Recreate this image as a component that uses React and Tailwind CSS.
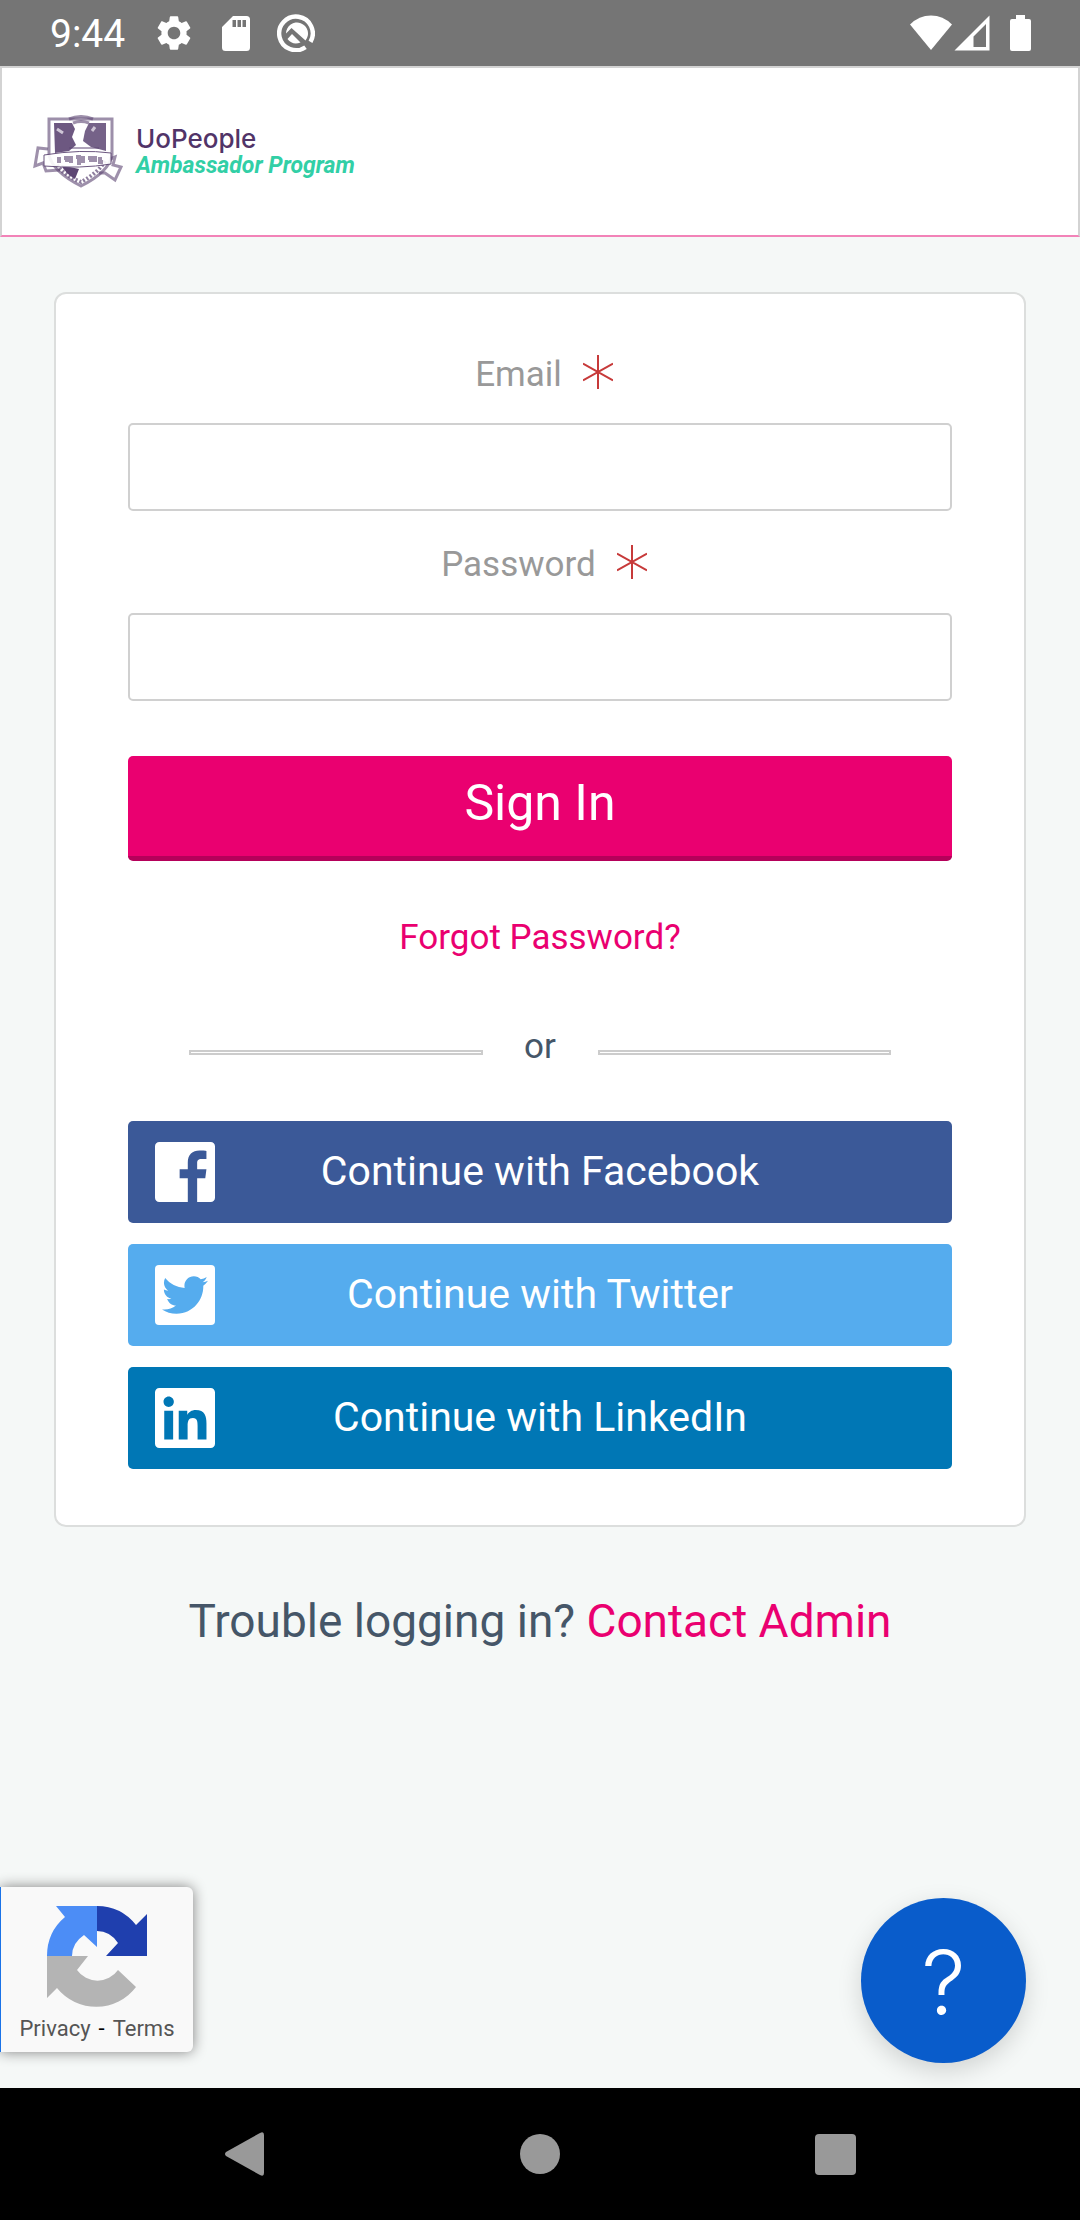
import React from "react";
import { MdSettings } from "react-icons/md";
import { FaLinkedin, FaTwitter } from "react-icons/fa";

function StatusBar() {
  return (
    <div className="flex h-[66px] items-center justify-between bg-[#757575] pl-[50px] pr-[49px] text-white">
      <div className="flex items-center">
        <span className="pt-0.5 text-[39px] leading-[44px]">9:44</span>
        <MdSettings size={42} className="ml-[28px]" />
        <svg width="28" height="35" viewBox="0 0 28 35" className="ml-[27px]" fill="currentColor">
          <path
            fillRule="evenodd"
            d="M11 0H24.500Q28 0 28 3.500V31.500Q28 35 24.500 35H3.500Q0 35 0 31.500V11ZM10.500 4V11H14V4ZM15.500 4V11H19V4ZM20.500 4V11H24V4Z"
          />
        </svg>
        <svg width="38" height="38" viewBox="0 0 38 38" className="ml-[27px]" fill="none">
          <path d="M28.500 33.200A16.800 16.800 0 1 1 33.500 27.800" stroke="currentColor" strokeWidth="4.400" />
          <path d="M9 19.500L14.500 14L28.500 26.500A11 11 0 1 0 9 19.500Z" fill="currentColor" />
          <path d="M10.500 25L15 20L23.500 28.500Q15.500 31.500 10.500 25Z" fill="currentColor" />
        </svg>
      </div>
      <div className="flex items-center">
        <svg width="42" height="36" viewBox="0 0 42 36" fill="currentColor">
          <path d="M0 9.500Q9 .5 21 .5T42 9.500L21 35Z" />
        </svg>
        <svg width="36" height="36" viewBox="0 0 36 36" className="ml-[2px]" fill="currentColor">
          <path fillRule="evenodd" d="M35.500 .5V35.500H.5ZM32 9L19.500 21.500V32H32Z" />
        </svg>
        <svg width="21" height="36" viewBox="0 0 21 36" className="ml-[20px]" fill="currentColor">
          <path d="M6 0H15V4H19Q21 4 21 6V34Q21 36 19 36H2Q0 36 0 34V6Q0 4 2 4H6Z" />
        </svg>
      </div>
    </div>
  );
}

function Logo() {
  return (
    <a href="#" className="flex items-center">
      <svg width="90" height="74" viewBox="0 0 90 74" fill="none" stroke="#5d4673">
        {/* shield */}
        <path d="M16 4H79V40Q76 57 48 71Q20 57 16 40Z" strokeWidth="3" fill="#fff" opacity=".6" />
        <path d="M21 8H39L42 14L39 22L43 30L36 36L22 38Z" fill="#5d4673" stroke="none" opacity=".9" />
        <path d="M56 8H73V36L58 32L50 26L52 16Z" fill="#5d4673" stroke="none" opacity=".85" />
        <path d="M36 4Q48 -1 60 4M40 8Q48 5 56 8" strokeWidth="3" opacity=".6" />
        <path d="M24 14l6 4M62 12l-3 4" stroke="#cfc6d6" strokeWidth="3" />
        <path d="M36 33H66" strokeWidth="2" opacity=".5" />
        <path d="M28 50L46 54L42 64Q33 59 28 50Z" fill="#5d4673" stroke="none" />
        <path d="M24 50Q31 60 48 67Q65 58 72 46" strokeWidth="4" strokeDasharray="2 2" opacity=".7" />
        {/* ribbon */}
        <path d="M15 34L5 33L2 51L10 48L13 56L27 55M77 44L82 42L80 50L88 52L82 65L72 58L66 58" strokeWidth="3" opacity=".6" />
        <path d="M11 40Q48 34 78 38V49Q48 54 11 51Z" fill="#fff" strokeWidth="1" opacity=".9" />
        <path d="M26 42v6M31 43h3v4M38 41v7M43 42h3v8M50 41v7M55 43h3v4M62 41v6M67 42v5h3" strokeWidth="4" opacity=".6" />
      </svg>
      <span className="ml-[13px] flex flex-col">
        <span className="font-[Inter] text-[26px] leading-[27px] font-medium text-[#513468]">UoPeople</span>
        <span className="text-[23px] leading-[27px] font-bold text-[#32cfa6] italic">Ambassador Program</span>
      </span>
    </a>
  );
}

function Field({ id, label, type }) {
  return (
    <div className="flex flex-col">
      <label htmlFor={id} className="flex items-center justify-center pl-2 text-[35px] leading-[40px] text-[#999]">
        {label}
        <svg width="30" height="34" viewBox="0 0 30 34" className="mb-1.5 ml-[21px]" stroke="#c73a3a" strokeWidth="2">
          <path d="M15 0V34M0 8.500L30 25.500M30 8.500L0 25.500" />
        </svg>
      </label>
      <input
        id={id}
        type={type}
        required
        className="mt-[28px] h-[88px] w-full rounded-[5px] border-2 border-[#d0d0d0] bg-white px-6 text-[35px] text-[#455668] outline-none"
      />
    </div>
  );
}

function FacebookIcon() {
  return (
    <svg width="60" height="60" viewBox="0 32 448 448" fill="currentColor">
      <path d="M448 64v384c0 17.700-14.300 32-32 32H314.700V302.800h60.600l8.700-67.600h-69.300V192c0-19.600 5.400-32.900 33.500-32.900H384V98.700c-6.200-.8-27.400-2.700-52.200-2.700-51.600 0-87 31.500-87 89.400v49.900H184v67.600h60.900V480H32c-17.700 0-32-14.300-32-32V64c0-17.700 14.300-32 32-32h384c17.700 0 32 14.300 32 32z" />
    </svg>
  );
}

function TwitterIcon() {
  return (
    <svg width="60" height="60" viewBox="0 0 60 60">
      <rect width="60" height="60" rx="4" fill="#fff" />
      <FaTwitter size={46} x="7" y="7" color="#55acee" />
    </svg>
  );
}

function LinkedInIcon() {
  return <FaLinkedin size={60} viewBox="0 32 448 448" />;
}

function RecaptchaBadge() {
  return (
    <div className="absolute bottom-9 left-0 flex h-[165px] w-[193px] flex-col items-center rounded-r-[6px] border-l border-[#1a73e8] bg-[#f9f9f9] pt-[18px] shadow-[0_0_14px_gray]">
      <svg width="102" height="102" viewBox="0 0 102 102">
        <path d="M10 1H51V42L38 30Q26 38 26 51H1Q1 27 19 12Z" fill="#4c8df6" />
        <path d="M51 1Q75 1 90 20L101 9V51H60L72 38Q64 26 51 26Z" fill="#1f3fae" />
        <path d="M1 51H42L31 65A25 25 0 0 0 72 65L90 82A50 50 0 0 1 11 83L1 93Z" fill="#b4b4b4" />
      </svg>
      <p className="mt-[9px] text-[22px] leading-[26px] text-black">
        <a href="#" className="text-[#555]">Privacy</a>
        <span className="px-2">-</span>
        <a href="#" className="text-[#555]">Terms</a>
      </p>
    </div>
  );
}

function NavBar() {
  return (
    <nav className="flex h-[132px] items-center justify-center gap-[255px] bg-black text-[#999]">
      <button type="button" aria-label="Back">
        <svg width="40" height="44" viewBox="0 0 40 44" fill="currentColor">
          <path d="M1 20L35 1Q39 -1 39 3V41Q39 45 35 43L1 24Q-1 22 1 20Z" />
        </svg>
      </button>
      <button type="button" aria-label="Home">
        <svg width="40" height="40" viewBox="0 0 40 40" fill="currentColor">
          <circle cx="20" cy="20" r="20" />
        </svg>
      </button>
      <button type="button" aria-label="Recents">
        <svg width="41" height="41" viewBox="0 0 41 41" fill="currentColor">
          <rect width="41" height="41" rx="4" />
        </svg>
      </button>
    </nav>
  );
}

export default function App() {
  const providers = [
    { name: "Facebook", Icon: FacebookIcon, color: "bg-[#3b5998]" },
    { name: "Twitter", Icon: TwitterIcon, color: "bg-[#55acee]" },
    { name: "LinkedIn", Icon: LinkedInIcon, color: "bg-[#0077b5]" },
  ];

  return (
    <div className="flex min-h-screen flex-col bg-[#f5f8f7] font-[Roboto,sans-serif]">
      <StatusBar />

      <header className="flex h-[171px] items-center border-2 border-[#d3d3d3] border-b-[#f283b8] bg-white pl-[31px]">
        <Logo />
      </header>

      <main className="relative flex-1 px-[54px] pt-[55px]">
        {/* Login card */}
        <form className="rounded-xl border-2 border-[#dcdedd] bg-white px-[72px] pt-[61px] pb-[56px]">
          <div className="flex flex-col gap-[34px]">
            <Field id="email" label="Email" type="email" />
            <Field id="password" label="Password" type="password" />
          </div>

          <button
            type="submit"
            className="mt-[55px] h-[105px] w-full rounded-[5px] border-b-[5px] border-[#b5005a] bg-[#ea0070] pb-1.5 text-[50px] leading-[60px] text-white"
          >
            Sign In
          </button>

          <div className="mt-[57px] text-center text-[35px] leading-[40px]">
            <a href="#" className="text-[#ea0070]">Forgot Password?</a>
          </div>

          <div className="mt-[69px] flex items-center justify-center px-[61px] text-[35px] leading-[40px] text-[#455668]">
            <span className="mt-2.5 h-[5px] flex-1 border-2 border-[#ccc]" />
            <span className="w-[115px] text-center">or</span>
            <span className="mt-2.5 h-[5px] flex-1 border-2 border-[#ccc]" />
          </div>

          {/* Social sign in */}
          <div className="mt-[54px] flex flex-col gap-[21px]">
            {providers.map(({ name, Icon, color }) => (
              <button
                key={name}
                type="button"
                className={`${color} flex h-[102px] items-center rounded-[5px] px-[27px] text-[41px] leading-[48px] text-white`}
              >
                <Icon />
                <span className="flex-1 pr-[60px] pb-0.5 text-center">Continue with {name}</span>
              </button>
            ))}
          </div>
        </form>

        <p className="mt-[66px] text-center text-[46px] leading-[56px] text-[#455668]">
          Trouble logging in? <a href="#" className="text-[#ea0070]">Contact Admin</a>
        </p>

        <RecaptchaBadge />
        <button
          type="button"
          aria-label="Help"
          className="absolute right-[54px] bottom-[25px] flex size-[165px] items-center justify-center rounded-full bg-[#095ccb] pt-0.5 font-[Inter] text-[88px] leading-none font-light text-white shadow-[0_8px_24px_rgba(0,0,0,0.15)]"
        >
          ?
        </button>
      </main>

      <NavBar />
    </div>
  );
}
